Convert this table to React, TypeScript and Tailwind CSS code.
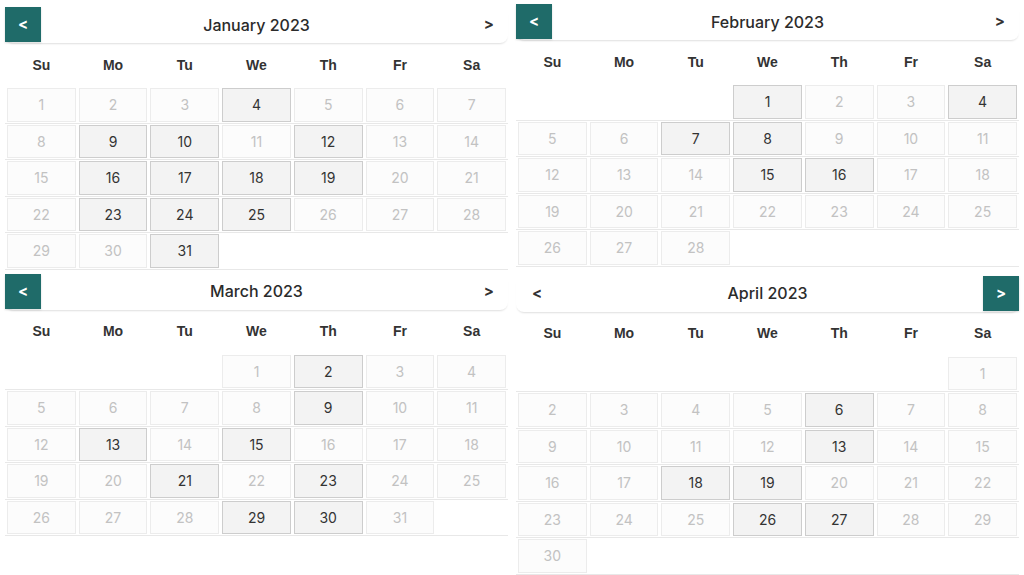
const weekdays = ["Su", "Mo", "Tu", "We", "Th", "Fr", "Sa"];

type Month = {
  name: string;
  days: number;
  start: number;
  active: number[];
  activeSide: "prev" | "next";
  top: string;
};

const months: Month[] = [
  { name: "January 2023", days: 31, start: 0, active: [4, 9, 10, 12, 16, 17, 18, 19, 23, 24, 25, 31], activeSide: "prev", top: "mt-[7px]" },
  { name: "February 2023", days: 28, start: 3, active: [1, 4, 7, 8, 15, 16], activeSide: "prev", top: "mt-[4px]" },
  { name: "March 2023", days: 31, start: 3, active: [2, 9, 13, 15, 21, 23, 29, 30], activeSide: "prev", top: "mt-[4px]" },
  { name: "April 2023", days: 30, start: 6, active: [6, 13, 18, 19, 26, 27], activeSide: "next", top: "mt-[6px]" },
];

function buildWeeks(m: Month) {
  const cells: (number | null)[] = [];
  for (let i = 0; i < m.start; i++) cells.push(null);
  for (let d = 1; d <= m.days; d++) cells.push(d);
  while (cells.length % 7 !== 0) cells.push(null);
  const weeks: (number | null)[][] = [];
  for (let i = 0; i < cells.length; i += 7) weeks.push(cells.slice(i, i + 7));
  return weeks;
}

function NavButton({ dir }: { dir: "<" | ">" }) {
  return (
    <button className="w-[36px] h-[35px] bg-[#1f6b69] text-white font-bold text-[15px] flex items-center justify-center shrink-0 shadow-[0_1px_2px_rgba(0,0,0,0.15)]">
      {dir}
    </button>
  );
}

function Calendar({ month }: { month: Month }) {
  const weeks = buildWeeks(month);
  return (
    <div className={month.top}>
      <div className="relative h-[36px] flex items-start justify-between rounded-lg shadow-[0_2px_2px_-1px_rgba(0,0,0,0.13)]">
        {month.activeSide === "prev" ? (
          <NavButton dir="<" />
        ) : (
          <span className="h-[35px] pl-[16px] flex items-center text-[15px] font-bold text-[#333]">&lt;</span>
        )}
        <div className="absolute inset-x-0 top-0 h-[35px] flex items-center justify-center pointer-events-none text-[16px] font-medium text-[#2b2b2b]">
          {month.name}
        </div>
        {month.activeSide === "next" ? (
          <NavButton dir=">" />
        ) : (
          <span className="h-[35px] pr-[14px] flex items-center text-[15px] font-bold text-[#333]">&gt;</span>
        )}
      </div>
      <div className="grid grid-cols-7 gap-[3px] px-[2px] h-[44px] items-center">
        {weekdays.map((w) => (
          <div key={w} className="text-center text-[14px] font-semibold text-[#333] font-['Liberation_Sans',sans-serif]">
            {w}
          </div>
        ))}
      </div>
      <div>
        {weeks.map((week, wi) => (
          <div key={wi} className="grid grid-cols-7 gap-[3px] px-[2px] py-px border-b border-[#e8e8e8]">
            {week.map((d, di) => {
              if (d === null) return <div key={di} className="h-[33.5px]" />;
              const on = month.active.includes(d);
              return (
                <div
                  key={di}
                  className={
                    on
                      ? "h-[33.5px] flex items-center justify-center border border-[#cdcdcd] bg-[#f3f3f3] text-[14px] text-[#333]"
                      : "h-[33.5px] flex items-center justify-center border border-[#ececec] bg-[#fcfcfc] text-[14px] text-[#c2c2c2]"
                  }
                >
                  {d}
                </div>
              );
            })}
          </div>
        ))}
      </div>
    </div>
  );
}

export default function App() {
  return (
    <div className="w-[1024px] h-[575px] bg-white overflow-hidden font-['Inter',sans-serif]">
      <div className="grid grid-cols-2 gap-x-2 px-[5px] items-start">
        {months.map((m) => (
          <Calendar key={m.name} month={m} />
        ))}
      </div>
    </div>
  );
}
